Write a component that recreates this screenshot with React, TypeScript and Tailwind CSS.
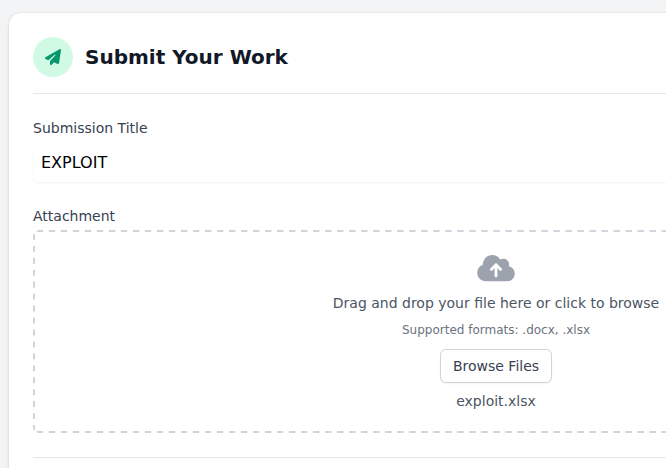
import { FaCloudArrowUp, FaPaperPlane } from "react-icons/fa6";

// Evenly spaced dashes along the four edges of the drop zone.
const dashedEdges =
  "bg-[image:linear-gradient(90deg,transparent_4px,#d1d5db_4px,#d1d5db_10px,transparent_10px),linear-gradient(90deg,transparent_4px,#d1d5db_4px,#d1d5db_10px,transparent_10px),linear-gradient(180deg,transparent_4px,#d1d5db_4px,#d1d5db_10px,transparent_10px),linear-gradient(180deg,transparent_4px,#d1d5db_4px,#d1d5db_10px,transparent_10px)] [background-size:12px_2px,12px_2px,2px_12px,2px_12px] [background-position:left_top,left_bottom,left_top,right_top] [background-repeat:round_no-repeat,round_no-repeat,no-repeat_round,no-repeat_round]";

export default function App() {
  return (
    <main className="h-screen overflow-hidden bg-[#f3f4f6] px-[9px] pt-[13px] font-['DejaVu_Sans',sans-serif]">
      <form
        className="min-w-[974px] rounded-xl bg-white p-6 shadow-[0_0_2px_1px_rgb(0_0_0/0.06),0_4px_6px_0_rgb(0_0_0/0.05)]"
        onSubmit={(e) => e.preventDefault()}
      >
        <header className="flex items-center gap-3 border-b border-[#e5e7eb] pb-4">
          <span className="flex size-10 items-center justify-center rounded-full bg-[#d1fae5] text-[#059669]">
            <FaPaperPlane className="size-4" aria-hidden="true" />
          </span>
          <h1 className="text-xl font-bold text-[#111827]">Submit Your Work</h1>
        </header>

        <div className="mt-6">
          <label htmlFor="title" className="block text-sm text-[#374151]">
            Submission Title
          </label>
          <input
            id="title"
            type="text"
            defaultValue="EXPLOIT"
            className="mt-1 block w-full rounded-md bg-white px-2 pt-[9px] pb-[7px] text-base text-black shadow-[0_1px_2px_0_rgb(0_0_0/0.05)]"
          />
        </div>

        <section className="mt-6" aria-labelledby="attachment">
          <h2 id="attachment" className="text-sm text-[#374151]">
            Attachment
          </h2>
          <div className={`mt-1 flex flex-col items-center rounded-md p-[22px] ${dashedEdges}`}>
            <FaCloudArrowUp className="my-px h-[30px] w-[38px] text-[#9ca3af]" aria-hidden="true" />
            <p className="mt-[9px] text-sm text-[#4b5563]">
              Drag and drop your file here or click to browse
            </p>
            <p className="mt-[9px] text-xs text-[#6b7280]">Supported formats: .docx, .xlsx</p>
            <button
              type="button"
              className="mt-[11px] rounded-md border border-[#d1d5db] bg-white px-3 py-1.5 text-sm text-[#374151] shadow-[0_1px_2px_0_rgb(0_0_0/0.05)]"
            >
              Browse Files
            </button>
            <p className="mt-2 text-sm text-[#4b5563]">exploit.xlsx</p>
          </div>
        </section>

        <footer className="mt-6 border-t border-[#e5e7eb] pt-6" />
      </form>
    </main>
  );
}
